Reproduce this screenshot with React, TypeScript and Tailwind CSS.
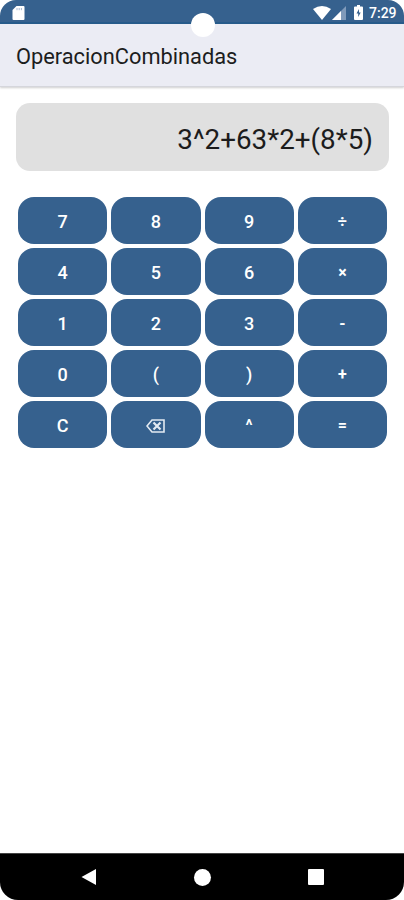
import { useState } from "react";

const KEYS = [
  "7", "8", "9", "÷",
  "4", "5", "6", "×",
  "1", "2", "3", "-",
  "0", "(", ")", "+",
  "C", "⌫", "^", "=",
];

const SMALL_KEYS = ["÷", "×", "+", "-", "^", "="];

function StatusBar() {
  return (
    <div className="relative h-6 shrink-0 flex items-center justify-between bg-[#36618e] border-b-2 border-[#275b8a] pl-3 pr-[6px]">
      <svg width="13" height="16" viewBox="0 0 13 16" className="mt-[3px]">
        <path d="M4.5 1H11.5Q12.5 1 12.5 2V14Q12.5 15 11.5 15H1.5Q.5 15 .5 14V5Z" fill="#fff" />
        <path d="M5 3V5.2M7.2 3V5.2M9.4 3V5.2" stroke="#a9b9d2" strokeWidth="1" />
      </svg>

      <div className="flex items-center mt-[3px]">
        <svg width="18" height="14" viewBox="0 0 18 14">
          <path d="M0 3Q9-3 18 3L9 14Z" fill="#fff" />
        </svg>
        <svg width="14" height="14" viewBox="0 0 14 14" className="ml-[1px]">
          <path d="M0 14L14 0V14Z" fill="#7f9aba" />
          <path d="M0 14L9 5V14Z" fill="#fff" />
        </svg>
        <svg width="9" height="15" viewBox="0 0 9 15" className="ml-[8px]">
          <path d="M3 0H6V1.5H8Q9 1.5 9 2.5V14Q9 15 8 15H1Q0 15 0 14V2.5Q0 1.5 1 1.5H3Z" fill="#fff" />
          <path d="M5 4L2.5 8.5H4.2V12L6.7 7.5H5Z" fill="#36618e" />
        </svg>
        <span className="ml-[6px] w-[29px] text-[14px] leading-[14px] font-medium text-white">7:29</span>
      </div>

      {/* Camera */}
      <div className="absolute left-[191px] top-[13px] size-6 rounded-full bg-white z-10" />
    </div>
  );
}

function NavigationBar() {
  return (
    <div className="h-[47px] shrink-0 bg-black border-t border-[#444] flex items-center justify-between pl-[80px] pr-[80px]">
      <button aria-label="Back">
        <svg width="17" height="18" viewBox="0 0 17 18">
          <path d="M1.5 9L16 1V17Z" fill="#fff" />
        </svg>
      </button>
      <button aria-label="Home" className="size-[17px] rounded-full bg-white" />
      <button aria-label="Recents" className="size-4 bg-white rounded-[1px]" />
    </div>
  );
}

export default function App() {
  const [expression, setExpression] = useState("3^2+63*2+(8*5)");

  const calculate = (text: string) => {
    try {
      const value = Function(`return ${text.replace(/\^/g, "**")}`)();
      return String(value);
    } catch {
      return "Error";
    }
  };

  const press = (key: string) => {
    if (key === "C") setExpression("");
    else if (key === "⌫") setExpression(prev => prev.slice(0, -1));
    else if (key === "=") setExpression(prev => calculate(prev));
    else {
      const symbol = key === "×" ? "*" : key === "÷" ? "/" : key;
      setExpression(prev => prev + symbol);
    }
  };

  return (
    <div className="bg-white">
      <div className="w-[404px] h-[900px] flex flex-col overflow-hidden rounded-t-[16px] rounded-b-[18px] bg-white font-[Roboto,sans-serif]">
        <StatusBar />

        <header className="h-[63px] shrink-0 flex items-center bg-[#ebecf4] pl-4 pt-[4px] border-b border-[#d5d6dc] shadow-[0_1px_2px_#cfcfcf]">
          <h1 className="text-[21.8px] leading-7 text-[#1c1d20]">OperacionCombinadas</h1>
        </header>

        <main className="flex-1 pt-4">
          {/* Display */}
          <div className="ml-4 mr-[15px] h-[68px] rounded-[14px] bg-[#e0e0e0] flex items-center justify-end px-4 pt-[5px] text-[27.8px] text-[#1c1c1c]">
            {expression}
          </div>

          {/* Keypad */}
          <div className="mt-[26px] ml-[18px] mr-[17px] grid grid-cols-4 gap-1">
            {KEYS.map(key => (
              <button
                key={key}
                onClick={() => press(key)}
                className="h-[47px] rounded-[16px] bg-[#36618e] flex items-center justify-center pt-[2px] text-[18px] font-medium text-white"
              >
                {key === "⌫" ? (
                  <svg width="19" height="14" viewBox="0 0 19 14" fill="none" stroke="#e3eaf2" strokeWidth="1.6">
                    <path d="M6 1H18V13H6L1 7Z" />
                    <path d="M7.5 3.5L14.5 10.5M14.5 3.5L7.5 10.5" strokeWidth="2.2" />
                  </svg>
                ) : (
                  <span className={SMALL_KEYS.includes(key) ? "text-[16px] font-bold" : ""}>{key}</span>
                )}
              </button>
            ))}
          </div>
        </main>

        <NavigationBar />
      </div>
    </div>
  );
}
